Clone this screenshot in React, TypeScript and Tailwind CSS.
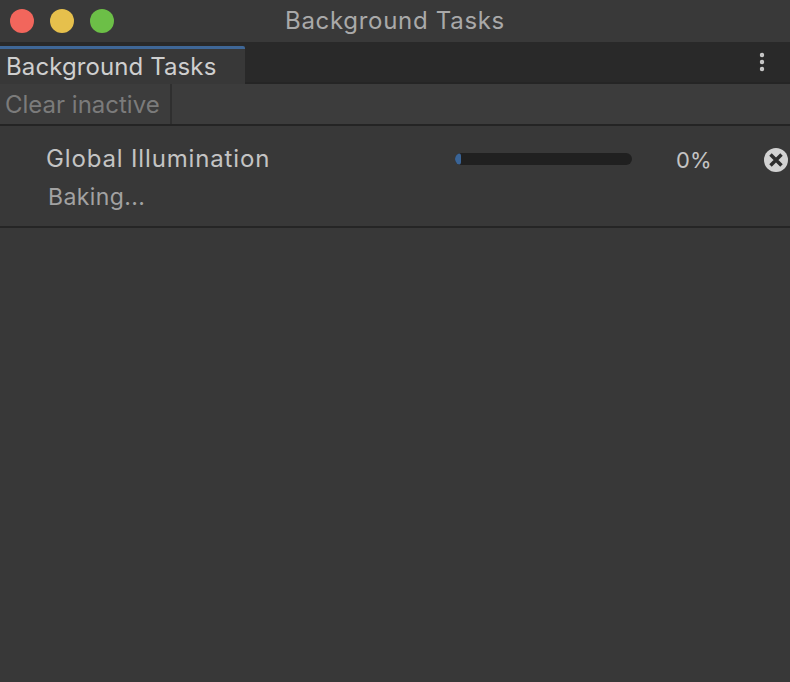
import { MoreVertical } from 'lucide-react'

function CancelIcon() {
  return (
    <svg width="24" height="24" viewBox="0 0 24 24">
      <circle cx="12" cy="12" r="12" fill="#d2d2d2" />
      <path d="M6.5 6.5l11 11M17.5 6.5l-11 11" stroke="#2e2e2e" strokeWidth="3.5" />
    </svg>
  )
}

export default function App() {
  return (
    <div className="flex h-[682px] w-[790px] flex-col overflow-hidden bg-[#383838] font-['Inter',sans-serif]">
      {/* Title bar */}
      <div className="relative flex h-[42px] shrink-0 items-center bg-[#393939] pl-[10px]">
        <div className="flex gap-[16px]">
          <div className="h-6 w-6 rounded-full bg-[#f2665c]" />
          <div className="h-6 w-6 rounded-full bg-[#e6c04c]" />
          <div className="h-6 w-6 rounded-full bg-[#6cbf47]" />
        </div>
        <div className="absolute inset-x-0 top-[6px] text-center text-[24px] leading-[30px] tracking-[0.7px] text-[#a9a9a9]">
          Background Tasks
        </div>
      </div>

      {/* Tab strip */}
      <div className="flex h-[42px] shrink-0 items-end bg-[#292929]">
        <div className="h-[38px] w-[245px] rounded-tr-[2px] border-t-[3px] border-[#3f6797] bg-[#383838] pl-[6px] text-[24px] leading-[36px] tracking-[0.1px] text-[#cfcfcf]">
          Background Tasks
        </div>
        <div className="flex h-full flex-1 items-center justify-end border-b-2 border-[#252525] pr-[16px]">
          <MoreVertical className="h-6 w-6 text-[#c8c8c8]" strokeWidth={2.4} />
        </div>
      </div>

      {/* Toolbar */}
      <div className="flex h-[42px] shrink-0 border-b-2 border-[#242424] bg-[#3c3c3c]">
        <div className="w-[172px] border-r-2 border-[#2f2f2f] pl-[5px] text-[24px] leading-[42px] text-[#7b7b7b]">
          Clear inactive
        </div>
      </div>

      {/* Task row */}
      <div className="flex h-[102px] shrink-0 items-start border-b-2 border-[#252525]">
        <div className="w-[455px] pl-[46px] pt-[17px]">
          <div className="text-[24px] leading-[32px] tracking-[0.85px] text-[#c4c4c4]">Global Illumination</div>
          <div className="ml-[2px] mt-[7px] text-[23px] leading-[30px] tracking-[0.4px] text-[#a2a2a2]">Baking...</div>
        </div>
        <div className="mt-[27px] h-[12px] w-[177px] overflow-hidden rounded-full bg-[#202020]">
          <div className="h-full w-[6px] rounded-full bg-[#3a6496]" />
        </div>
        <div className="ml-[44px] mt-[19px] text-[22px] leading-[30px] text-[#c4c4c4]">0%</div>
        <div className="ml-[53px] mt-[22px]">
          <CancelIcon />
        </div>
      </div>
    </div>
  )
}
